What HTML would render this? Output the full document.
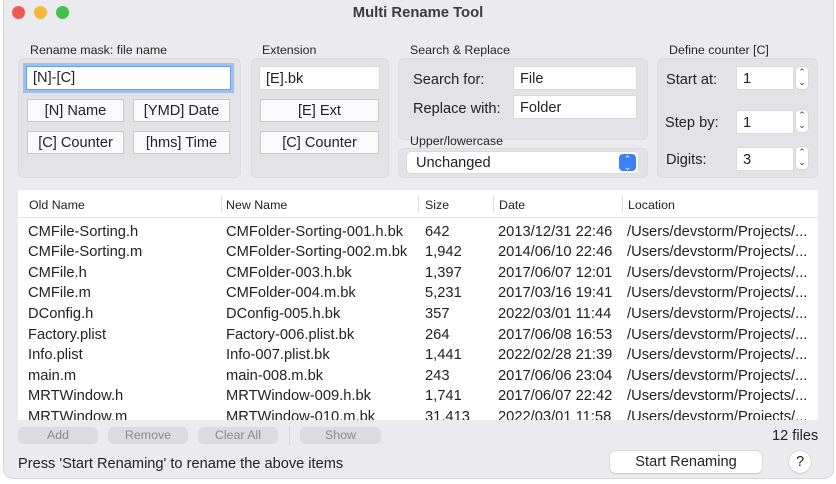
<!DOCTYPE html>
<html><head><meta charset="utf-8"><style>
*{box-sizing:border-box;margin:0;padding:0}
body{width:836px;height:484px;background:#fff;font-family:"Liberation Sans",sans-serif;color:#222;position:relative;overflow:hidden}
.win{position:absolute;left:3px;top:0;width:831px;height:479px;background:#ebeaee;border-radius:0 0 10px 10px;border:1px solid #d8d8dc;border-top:none}
.a{position:absolute;white-space:nowrap}
.dot{position:absolute;top:6px;width:13px;height:13px;border-radius:50%}
.grp{position:absolute;background:#e3e2e6;border-radius:6px;border:1px solid #dcdbdf}
.lbl{position:absolute;font-size:12.4px;color:#262626}
.fld{position:absolute;background:#fff;height:22px;font-size:14.6px;padding:4px 6px 0;box-shadow:0 0 0 .5px #d0d0d4}
.btn{position:absolute;background:#fafafa;border:1px solid #c8c8cc;font-size:14.6px;text-align:center;line-height:22px;height:23px}
.step{position:absolute;width:12px;height:22px;background:#fff;border-radius:4px;box-shadow:0 0 0 .5px #c8c8cc;font-size:9px;line-height:10px;text-align:center;color:#333}
.tbl{position:absolute;left:18px;top:190px;width:800px;height:230px;background:#fff;overflow:hidden}
.hd{position:absolute;top:0;height:28px;width:800px;border-bottom:1px solid #e4e4e4;font-size:12.4px}
.hd span{position:absolute;top:8px}
.sep{position:absolute;top:6px;width:1px;height:16px;background:#ddd}
.row{position:absolute;left:0;width:800px;height:20.6px;font-size:14.7px}
.row span{position:absolute;top:3.5px}
.gb{position:absolute;top:427px;height:17px;background:#dcdbdf;border-radius:5px;font-size:12.4px;color:#888;text-align:center;line-height:17px}
.s{font-size:14.6px}
</style></head><body>
<div class="win">
</div>
<div class="dot" style="left:12px;background:#ee5a52"></div>
<div class="dot" style="left:34px;background:#f6b73a"></div>
<div class="dot" style="left:56px;background:#3fc14a"></div>
<div class="a" style="left:0;width:836px;text-align:center;top:5px;font-size:14.8px;font-weight:bold;color:#3a3a3a">Multi Rename Tool</div>

<div class="lbl" style="left:30px;top:43px">Rename mask: file name</div>
<div class="grp" style="left:18px;top:58px;width:223px;height:120px"></div>
<div class="fld" style="left:26px;top:66px;width:205px;height:24px;box-shadow:0 0 0 3px #9cc0ef;border:1px solid #6a9ee6;padding:3px 6px 0">[N]-[C]</div>
<div class="btn" style="left:27px;top:99px;width:97px">[N] Name</div>
<div class="btn" style="left:133px;top:99px;width:97px">[YMD] Date</div>
<div class="btn" style="left:27px;top:131px;width:97px">[C] Counter</div>
<div class="btn" style="left:133px;top:131px;width:97px">[hms] Time</div>

<div class="lbl" style="left:262px;top:43px">Extension</div>
<div class="grp" style="left:251px;top:58px;width:138px;height:120px"></div>
<div class="fld" style="left:260px;top:67px;width:119px">[E].bk</div>
<div class="btn" style="left:260px;top:99px;width:119px">[E] Ext</div>
<div class="btn" style="left:260px;top:131px;width:119px">[C] Counter</div>

<div class="lbl" style="left:410px;top:43px">Search &amp; Replace</div>
<div class="grp" style="left:398px;top:58px;width:250px;height:82px"></div>
<div class="a s" style="left:413px;top:72px">Search for:</div>
<div class="fld" style="left:514px;top:67px;width:122px">File</div>
<div class="a s" style="left:413px;top:101px">Replace with:</div>
<div class="fld" style="left:514px;top:96px;width:122px">Folder</div>
<div class="lbl" style="left:410px;top:134px">Upper/lowercase</div>
<div class="grp" style="left:398px;top:148px;width:250px;height:30px"></div>
<div class="fld" style="left:407px;top:152px;width:231px;height:21px;border-radius:4px;padding:3px 9px 0">Unchanged</div>
<div class="a" style="left:619px;top:154px;width:17px;height:17px;background:#3b82f6;border-radius:4px;color:#fff;font-size:9px;line-height:8px;text-align:center;padding-top:1px">&#8963;<br>&#8964;</div>

<div class="lbl" style="left:669px;top:43px">Define counter [C]</div>
<div class="grp" style="left:657px;top:58px;width:161px;height:120px"></div>
<div class="a s" style="left:666px;top:72px">Start at:</div>
<div class="fld" style="left:737px;top:67px;width:56px">1</div>
<div class="step" style="left:796px;top:67px">&#8963;<br>&#8964;</div>
<div class="a s" style="left:665px;top:115px">Step by:</div>
<div class="fld" style="left:737px;top:111px;width:56px">1</div>
<div class="step" style="left:796px;top:110px">&#8963;<br>&#8964;</div>
<div class="a s" style="left:666px;top:152px">Digits:</div>
<div class="fld" style="left:737px;top:148px;width:56px">3</div>
<div class="step" style="left:796px;top:147px">&#8963;<br>&#8964;</div>

<div class="tbl">
<div class="hd"><span style="left:11px">Old Name</span><span style="left:208px">New Name</span><span style="left:407px">Size</span><span style="left:481px">Date</span><span style="left:610px">Location</span>
<div class="sep" style="left:203px"></div><div class="sep" style="left:400px"></div><div class="sep" style="left:475px"></div><div class="sep" style="left:604px"></div></div>
<div class="row" style="top:30px"><span style="left:10px">CMFile-Sorting.h</span><span style="left:208px">CMFolder-Sorting-001.h.bk</span><span style="left:407px">642</span><span style="left:480px">2013/12/31 22:46</span><span style="left:609px">/Users/devstorm/Projects/...</span></div>
<div class="row" style="top:50.6px"><span style="left:10px">CMFile-Sorting.m</span><span style="left:208px">CMFolder-Sorting-002.m.bk</span><span style="left:407px">1,942</span><span style="left:480px">2014/06/10 22:46</span><span style="left:609px">/Users/devstorm/Projects/...</span></div>
<div class="row" style="top:71.2px"><span style="left:10px">CMFile.h</span><span style="left:208px">CMFolder-003.h.bk</span><span style="left:407px">1,397</span><span style="left:480px">2017/06/07 12:01</span><span style="left:609px">/Users/devstorm/Projects/...</span></div>
<div class="row" style="top:91.8px"><span style="left:10px">CMFile.m</span><span style="left:208px">CMFolder-004.m.bk</span><span style="left:407px">5,231</span><span style="left:480px">2017/03/16 19:41</span><span style="left:609px">/Users/devstorm/Projects/...</span></div>
<div class="row" style="top:112.4px"><span style="left:10px">DConfig.h</span><span style="left:208px">DConfig-005.h.bk</span><span style="left:407px">357</span><span style="left:480px">2022/03/01 11:44</span><span style="left:609px">/Users/devstorm/Projects/...</span></div>
<div class="row" style="top:133px"><span style="left:10px">Factory.plist</span><span style="left:208px">Factory-006.plist.bk</span><span style="left:407px">264</span><span style="left:480px">2017/06/08 16:53</span><span style="left:609px">/Users/devstorm/Projects/...</span></div>
<div class="row" style="top:153.6px"><span style="left:10px">Info.plist</span><span style="left:208px">Info-007.plist.bk</span><span style="left:407px">1,441</span><span style="left:480px">2022/02/28 21:39</span><span style="left:609px">/Users/devstorm/Projects/...</span></div>
<div class="row" style="top:174.2px"><span style="left:10px">main.m</span><span style="left:208px">main-008.m.bk</span><span style="left:407px">243</span><span style="left:480px">2017/06/06 23:04</span><span style="left:609px">/Users/devstorm/Projects/...</span></div>
<div class="row" style="top:194.8px"><span style="left:10px">MRTWindow.h</span><span style="left:208px">MRTWindow-009.h.bk</span><span style="left:407px">1,741</span><span style="left:480px">2017/06/07 22:42</span><span style="left:609px">/Users/devstorm/Projects/...</span></div>
<div class="row" style="top:215.4px"><span style="left:10px">MRTWindow.m</span><span style="left:208px">MRTWindow-010.m.bk</span><span style="left:407px">31,413</span><span style="left:480px">2022/03/01 11:58</span><span style="left:609px">/Users/devstorm/Projects/...</span></div>
</div>

<div class="gb" style="left:18px;width:80px">Add</div>
<div class="gb" style="left:108px;width:80px">Remove</div>
<div class="gb" style="left:198px;width:80px">Clear All</div>
<div class="a" style="left:289px;top:426px;width:1px;height:19px;background:#d4d4d8"></div>
<div class="gb" style="left:300px;width:81px">Show</div>
<div class="a s" style="left:772px;top:428px">12 files</div>
<div class="a s" style="left:18px;top:456px">Press 'Start Renaming' to rename the above items</div>
<div class="a" style="left:610px;top:451px;width:152px;height:22px;background:#fff;border-radius:5px;box-shadow:0 0 0 .5px #c4c4c8,0 1px 1px #ccc;font-size:14.6px;text-align:center;line-height:22px">Start Renaming</div>
<div class="a" style="left:789px;top:451px;width:22px;height:22px;background:#fff;border-radius:50%;box-shadow:0 0 0 .5px #c4c4c8,0 1px 1px #ccc;font-size:14.6px;text-align:center;line-height:22px">?</div>
</body></html>
